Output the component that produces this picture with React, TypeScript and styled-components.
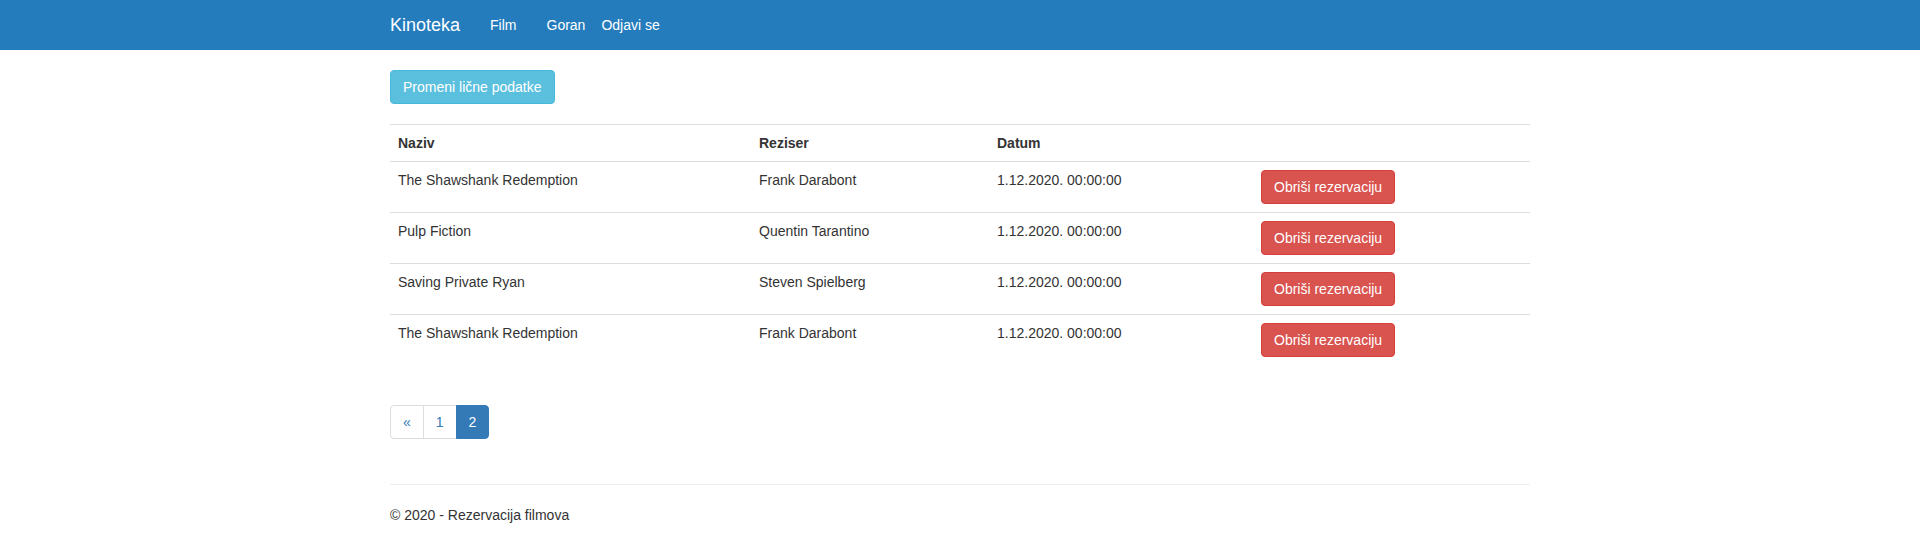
import styled, { createGlobalStyle } from "styled-components";

const rezervacije = [
  { naziv: "The Shawshank Redemption", reziser: "Frank Darabont", datum: "1.12.2020. 00:00:00" },
  { naziv: "Pulp Fiction", reziser: "Quentin Tarantino", datum: "1.12.2020. 00:00:00" },
  { naziv: "Saving Private Ryan", reziser: "Steven Spielberg", datum: "1.12.2020. 00:00:00" },
  { naziv: "The Shawshank Redemption", reziser: "Frank Darabont", datum: "1.12.2020. 00:00:00" },
];

const GlobalStyle = createGlobalStyle`
  * { box-sizing: border-box; }
  body {
    margin: 0;
    font-family: "Liberation Sans", Arial, Helvetica, sans-serif;
    font-size: 14px;
    line-height: 20px;
    color: #333;
    background: #fff;
  }
`;

const Navbar = styled.nav`
  height: 50px;
  background-color: #247cbd;
  margin-bottom: 20px;
`;

const Container = styled.div`
  width: 1140px;
  margin: 0 auto;
`;

const NavInner = styled(Container)`
  display: flex;
  align-items: center;
  height: 50px;
`;

const Brand = styled.a`
  font-size: 18px;
  line-height: 20px;
  color: #fff;
  margin-right: 30px;
`;

const NavLink = styled.a<{ gap?: number }>`
  color: #fff;
  font-size: 14px;
  margin-right: ${(p) => p.gap ?? 0}px;
`;

const Btn = styled.a<{ variant: "info" | "danger" }>`
  display: inline-block;
  padding: 6px 12px;
  font-size: 14px;
  line-height: 20px;
  border-radius: 4px;
  border: 1px solid ${(p) => (p.variant === "info" ? "#46b8da" : "#d43f3a")};
  background-color: ${(p) => (p.variant === "info" ? "#5bc0de" : "#d9534f")};
  color: #fff;
  cursor: pointer;
`;

const ButtonRow = styled.div`
  margin-bottom: 20px;
  height: 34px;
`;

const Table = styled.table`
  width: 1140px;
  border-collapse: collapse;
  border-spacing: 0;
  margin-bottom: 20px;
`;

const Cell = styled.td<{ w?: number }>`
  padding: 8px;
  vertical-align: top;
  border-top: 1px solid #ddd;
  text-align: left;
  line-height: 20px;
  width: ${(p) => (p.w ? `${p.w}px` : "auto")};
`;

const HeadCell = styled(Cell).attrs({ as: "th" })`
  font-weight: bold;
`;

const Pagination = styled.ul`
  display: flex;
  list-style: none;
  margin: 40px 0 45px;
  padding: 0;
`;

const PageLink = styled.li<{ active?: boolean; first?: boolean; last?: boolean }>`
  padding: 6px 12px;
  line-height: 20px;
  border: 1px solid ${(p) => (p.active ? "#337ab7" : "#ddd")};
  margin-left: ${(p) => (p.first ? 0 : -1)}px;
  color: ${(p) => (p.active ? "#fff" : "#337ab7")};
  background: ${(p) => (p.active ? "#337ab7" : "#fff")};
  border-radius: ${(p) => (p.first ? "4px 0 0 4px" : p.last ? "0 4px 4px 0" : "0")};
  position: relative;
  z-index: ${(p) => (p.active ? 2 : 1)};
`;

const Rule = styled.hr`
  margin: 20px 0;
  border: 0;
  border-top: 1px solid #eee;
`;

const Footer = styled.footer`
  p { margin: 0 0 10px; }
`;

function App() {
  return (
    <>
      <GlobalStyle />
      <Navbar>
        <NavInner>
          <Brand>Kinoteka</Brand>
          <NavLink gap={30}>Film</NavLink>
          <NavLink gap={16}>Goran</NavLink>
          <NavLink>Odjavi se</NavLink>
        </NavInner>
      </Navbar>
      <Container>
        <ButtonRow>
          <Btn variant="info">Promeni lične podatke</Btn>
        </ButtonRow>
        <Table>
          <tbody>
            <tr>
              <HeadCell w={361}>Naziv</HeadCell>
              <HeadCell w={238}>Reziser</HeadCell>
              <HeadCell w={264}>Datum</HeadCell>
              <HeadCell />
            </tr>
            {rezervacije.map((r, i) => (
              <tr key={i}>
                <Cell>{r.naziv}</Cell>
                <Cell>{r.reziser}</Cell>
                <Cell>{r.datum}</Cell>
                <Cell>
                  <Btn variant="danger">Obriši rezervaciju</Btn>
                </Cell>
              </tr>
            ))}
          </tbody>
        </Table>
        <Pagination>
          <PageLink first>«</PageLink>
          <PageLink>1</PageLink>
          <PageLink active last>2</PageLink>
        </Pagination>
        <Rule />
        <Footer>
          <p>© 2020 - Rezervacija filmova</p>
        </Footer>
      </Container>
    </>
  );
}

export default App;
